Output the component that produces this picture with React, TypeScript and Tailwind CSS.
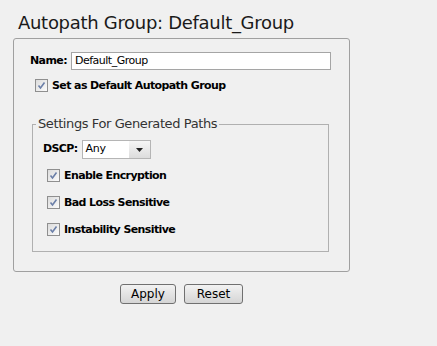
import React from "react";

const font = { fontFamily: '"DejaVu Sans", Verdana, sans-serif' };

function Check() {
  return (
    <span className="inline-flex h-[13px] w-[13px] shrink-0 items-center justify-center border border-[#8f8f8f] bg-gradient-to-br from-[#dcdcdc] to-[#fbfbfb]">
      <svg width="9" height="9" viewBox="0 0 9 9">
        <path d="M1.5 4.5 L3.5 7 L7.5 1.5" fill="none" stroke="#6b7fa8" strokeWidth="1.6" />
      </svg>
    </span>
  );
}

function CheckRow({ label }: { label: string }) {
  return (
    <div className="flex items-center gap-[4px]">
      <Check />
      <span className="text-[11px] font-bold leading-[13px] tracking-[-0.6px] text-black">{label}</span>
    </div>
  );
}

export default function App() {
  return (
    <div className="h-[346px] w-[437px] bg-[#f0f0f0] text-black" style={font}>
      <div className="pl-[18px] pt-[12px] text-[18px] leading-[22px] tracking-[-0.3px] text-[#1a1a1a]">
        Autopath Group: Default_Group
      </div>
      <div className="ml-[13px] mt-[4px] h-[234px] w-[337px] rounded-[3px] border border-[#a0a0a0] pl-[16px] pt-[13px]">
        <div className="flex w-[301px] items-center gap-[4px]">
          <span className="text-[11px] font-bold tracking-[-0.6px]">Name:</span>
          <div className="flex h-[18px] flex-1 items-center border border-[#a5a5a5] bg-white pl-[3px] text-[11px] tracking-[-0.5px]">
            Default_Group
          </div>
        </div>
        <div className="ml-[5px] mt-[9px]">
          <CheckRow label="Set as Default Autopath Group" />
        </div>
        <fieldset className="ml-[2px] mt-[25px] h-[135px] w-[297px] border border-[#b0b0b0] px-[10px] pt-0">
          <legend className="-ml-[7px] px-[2px] text-[13px] leading-[14px] tracking-[-0.4px] text-[#333]">
            Settings For Generated Paths
          </legend>
          <div className="mt-[9px] flex items-center gap-[4px]">
            <span className="text-[11px] font-bold tracking-[-0.6px]">DSCP:</span>
            <div className="flex h-[19px] w-[69px] items-center border border-[#b5b5b5] bg-white">
              <span className="flex-1 pl-[3px] text-[11px] tracking-[-0.3px]">Any</span>
              <span className="flex h-full w-[21px] items-center justify-center bg-gradient-to-b from-[#f6f6f6] to-[#dcdcdc]">
                <svg width="7" height="4" viewBox="0 0 7 4">
                  <path d="M0 0 H7 L3.5 4 Z" fill="#222" />
                </svg>
              </span>
            </div>
          </div>
          <div className="ml-[4px] mt-[10px] flex flex-col gap-[14px]">
            <CheckRow label="Enable Encryption" />
            <CheckRow label="Bad Loss Sensitive" />
            <CheckRow label="Instability Sensitive" />
          </div>
        </fieldset>
      </div>
      <div className="ml-[120px] mt-[12px] flex gap-[8px]">
        <button className="h-[20px] w-[56px] rounded-[3px] border border-[#707070] bg-gradient-to-b from-[#f2f2f2] to-[#d5d5d5] text-[12px] leading-[18px] text-black">
          Apply
        </button>
        <button className="h-[20px] w-[59px] rounded-[3px] border border-[#707070] bg-gradient-to-b from-[#f2f2f2] to-[#d5d5d5] text-[12px] leading-[18px] text-black">
          Reset
        </button>
      </div>
    </div>
  );
}
